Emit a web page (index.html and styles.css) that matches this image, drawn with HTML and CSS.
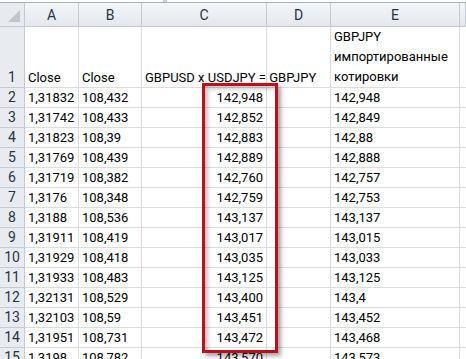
FILE: index.html
```html
<!DOCTYPE html>
<html lang="ru">
<head>
    <meta charset="UTF-8">
    <meta name="viewport" content="width=device-width, initial-scale=1.0">
    <title>GBPJPY</title>
    <link rel="stylesheet" href="styles.css">
</head>
<body>
    <div class="formula-edge"><span class="split"></span></div>
    <div class="sheet">
        <div class="row head-row">
            <div class="corner"><span class="tri"></span></div>
            <div class="col-head">A</div>
            <div class="col-head">B</div>
            <div class="col-head">C</div>
            <div class="col-head">D</div>
            <div class="col-head">E</div>
            <div class="col-head"></div>
        </div>
        <div class="row title-row">
            <div class="num">1</div>
            <div class="cell">Close</div>
            <div class="cell">Close</div>
            <div class="cell">GBPUSD x USDJPY = GBPJPY</div>
            <div class="cell"></div>
            <div class="cell wrap">GBPJPY импортированные котировки</div>
            <div class="cell"></div>
        </div>
        <div id="rows"></div>

        <div class="highlight"></div>
    </div>

    <script>
        const data = [
            ['1,31832', '108,432', '142,948', '142,948'],
            ['1,31742', '108,433', '142,852', '142,849'],
            ['1,31823', '108,39', '142,883', '142,88'],
            ['1,31769', '108,439', '142,889', '142,888'],
            ['1,31719', '108,382', '142,760', '142,757'],
            ['1,3176', '108,348', '142,759', '142,753'],
            ['1,3188', '108,536', '143,137', '143,137'],
            ['1,31911', '108,419', '143,017', '143,015'],
            ['1,31929', '108,418', '143,035', '143,033'],
            ['1,31933', '108,483', '143,125', '143,125'],
            ['1,32131', '108,529', '143,400', '143,4'],
            ['1,32103', '108,59', '143,451', '143,452'],
            ['1,31951', '108,731', '143,472', '143,468'],
            ['1,3198', '108,782', '143,570', '143,573']
        ];

        const rows = document.getElementById('rows');
        data.forEach((r, i) => {
            const row = document.createElement('div');
            row.className = 'row';
            row.innerHTML =
                '<div class="num">' + (i + 2) + '</div>' +
                '<div class="cell">' + r[0] + '</div>' +
                '<div class="cell">' + r[1] + '</div>' +
                '<div class="cell right">' + r[2] + '</div>' +
                '<div class="cell"></div>' +
                '<div class="cell">' + r[3] + '</div>' +
                '<div class="cell"></div>';
            rows.appendChild(row);
        });
    </script>
</body>
</html>
```

FILE: styles.css
```css
body {
    margin: 0;
    background: #fff;
    font-family: Roboto, "Liberation Sans", Arial, sans-serif;
    font-size: 13px;
    color: #000;
    overflow: hidden;
}
.formula-edge {
    position: relative;
    height: 2px;
    border-bottom: 1px solid #a9b1bb;
}
.split {
    position: absolute;
    left: 163px;
    top: 0;
    width: 4px;
    height: 2px;
    background: #c9ced4;
}
.sheet {
    position: relative;
}
.row {
    display: grid;
    grid-template-columns: 25px 54px 63px 125px 64px 129px 1fr;
    height: 20px;
}
.head-row {
    height: 24px;
}
.title-row {
    height: 61px;
}
.corner,
.col-head,
.num {
    background: linear-gradient(#f3f5f8, #e4e8ee);
    border-right: 1px solid #c5cad1;
    border-bottom: 1px solid #c5cad1;
    color: #253448;
    font-size: 14px;
}
.corner {
    position: relative;
    background: #e7eaee;
}
.tri {
    position: absolute;
    right: 4px;
    bottom: 4px;
    width: 0;
    height: 0;
    border-left: 12px solid transparent;
    border-bottom: 12px solid #c2c6cc;
}
.col-head {
    display: flex;
    align-items: center;
    justify-content: center;
}
.num {
    display: flex;
    align-items: flex-end;
    justify-content: center;
    line-height: 19px;
    background: #e8ebef;
}
.cell {
    border-right: 1px solid #dadcdd;
    border-bottom: 1px solid #dadcdd;
    padding: 0 3px;
    line-height: 19px;
    display: flex;
    align-items: flex-end;
    white-space: nowrap;
    overflow: visible;
}
.cell.right {
    justify-content: flex-end;
}
.cell.wrap {
    white-space: normal;
    line-height: 20px;
}
.highlight {
    position: absolute;
    left: 202px;
    top: 80px;
    width: 70px;
    height: 264px;
    border: 3px solid #c00f1a;
    box-shadow: 3px 3px 4px rgba(0, 0, 0, 0.35), inset 3px 3px 4px rgba(0, 0, 0, 0.22);
}
```
